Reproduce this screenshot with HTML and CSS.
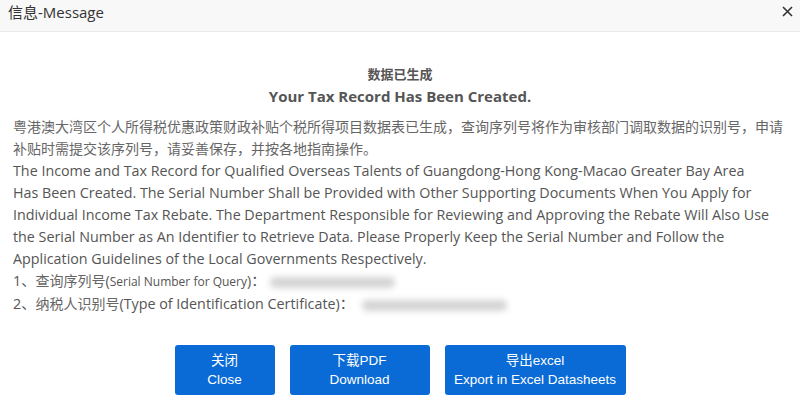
FILE: index.html
```html
<!DOCTYPE html>
<html lang="zh-CN">
<head>
  <meta charset="UTF-8" />
  <title>信息-Message</title>
  <link rel="stylesheet" href="styles.css">
</head>
<body>
  <div class="dialog">
    <div class="dialog-header">
      <span class="dialog-title">信息-Message</span>
      <span class="dialog-close">
        <svg width="11" height="11" viewBox="0 0 11 11">
          <path d="M1 1 L10 10 M10 1 L1 10" stroke="#333" stroke-width="1.6" />
        </svg>
      </span>
    </div>

    <div class="dialog-body">
      <div class="heading">
        <div class="heading-cn">数据已生成</div>
        <div class="heading-en">Your Tax Record Has Been Created.</div>
      </div>

      <div class="content">
        <p class="cn">粤港澳大湾区个人所得税优惠政策财政补贴个税所得项目数据表已生成，查询序列号将作为审核部门调取数据的识别号，申请补贴时需提交该序列号，请妥善保存，并按各地指南操作。</p>
        <p class="en">The Income and Tax Record for Qualified Overseas Talents of Guangdong-Hong Kong-Macao Greater Bay Area<br />
          Has Been Created. The Serial Number Shall be Provided with Other Supporting Documents When You Apply for<br />
          Individual Income Tax Rebate. The Department Responsible for Reviewing and Approving the Rebate Will Also Use<br />
          the Serial Number as An Identifier to Retrieve Data. Please Properly Keep the Serial Number and Follow the<br />
          Application Guidelines of the Local Governments Respectively.</p>
        <p>1、<span class="cn">查询序列号</span>(<span class="small">Serial Number for Query</span>)：<span class="blur blur-short"></span></p>
        <p>2、<span class="cn">纳税人识别号</span>(Type of Identification Certificate)：<span class="blur blur-long"></span></p>
      </div>

      <div class="actions">
        <button class="btn btn-close">关闭<br />Close</button>
        <button class="btn btn-pdf">下载PDF<br />Download</button>
        <button class="btn btn-excel">导出excel<br />Export in Excel Datasheets</button>
      </div>
    </div>
  </div>
</body>
</html>
```

FILE: styles.css
```css
/* Reset */
* {
  box-sizing: border-box;
}

body, html {
  margin: 0;
  height: 100%;
  background: #fff;
  font-family: "Open Sans", "Noto Sans CJK SC", sans-serif;
  color: #555;
}

.dialog {
  width: 800px;
  height: 417px;
  display: flex;
  flex-direction: column;
}

/* Header */
.dialog-header {
  height: 32px;
  background: #f8f8f8;
  border-bottom: 1px solid #e8e8e8;
  display: flex;
  align-items: center;
  justify-content: space-between;
  padding: 0 7px 9px 8px;
}

.dialog-title {
  font-size: 15px;
  color: #333;
}

.dialog-close {
  display: flex;
  cursor: pointer;
}

/* Body */
.dialog-body {
  padding: 32px 13px 0 13px;
}

.heading {
  text-align: center;
  font-weight: bold;
  color: #555;
}

.heading-cn {
  font-size: 13px;
  line-height: 20px;
}

.heading-en {
  font-size: 15px;
  line-height: 24px;
}

.content {
  margin-top: 8px;
  font-size: 14.3px;
  line-height: 22px;
  color: #555;
}

.content p {
  margin: 0;
}

.content .en {
  white-space: nowrap;
}

.cn {
  font-size: 14px;
  color: #666;
}

.small {
  font-size: 12px;
}

.blur {
  display: inline-block;
  height: 11px;
  vertical-align: middle;
  background: #d4d4d4;
  border-radius: 5px;
  filter: blur(3px);
}

.blur-short {
  width: 125px;
  margin-left: 4px;
}

.blur-long {
  width: 145px;
  margin-left: 8px;
}

/* Buttons */
.actions {
  margin-top: 30px;
  display: flex;
  justify-content: center;
  gap: 15px;
}

.btn {
  height: 50px;
  padding: 0;
  font-family: "Liberation Sans", "Noto Sans CJK SC", sans-serif;
  font-size: 13.5px;
  line-height: 19px;
  white-space: nowrap;
  color: #fff;
  background-color: #0a6bd6;
  border: none;
  border-radius: 3px;
  cursor: pointer;
}

.btn-close {
  width: 100px;
}

.btn-pdf {
  width: 140px;
}

.btn-excel {
  width: 181px;
}
```
